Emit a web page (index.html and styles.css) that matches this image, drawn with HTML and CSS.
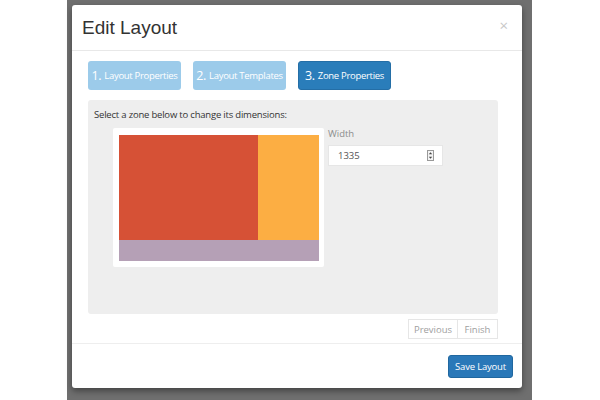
FILE: index.html
```html
<!DOCTYPE html>
<html lang="en">
<head>
  <meta charset="UTF-8">
  <title>Edit Layout</title>
  <link rel="stylesheet" href="styles.css">
</head>
<body>
  <div class="backdrop">
    <div class="dialog">
      <div class="dialog-header">
        <h1>Edit Layout</h1>
        <span class="close">&times;</span>
      </div>

      <div class="dialog-body">
        <div class="steps">
          <span class="step"><b>1.</b> Layout Properties</span>
          <span class="step"><b>2.</b> Layout Templates</span>
          <span class="step active"><b>3.</b> Zone Properties</span>
        </div>

        <div class="panel">
          <p class="hint">Select a zone below to change its dimensions:</p>
          <div class="zone-row">
            <div class="preview">
              <div class="zones">
                <div class="zone zone-main"></div>
                <div class="zone zone-side"></div>
                <div class="zone zone-footer"></div>
              </div>
            </div>
            <div class="field">
              <label>Width</label>
              <div class="number-input">
                <span>1335</span>
                <span class="spin">
                  <svg width="7" height="11" viewBox="0 0 7 11">
                    <rect x="0.5" y="0.5" width="6" height="10" fill="#f4f4f4" stroke="#999"/>
                    <path d="M1.8 4.2 L3.5 2.2 L5.2 4.2 Z" fill="#444"/>
                    <path d="M1.8 6.8 L3.5 8.8 L5.2 6.8 Z" fill="#444"/>
                  </svg>
                </span>
              </div>
            </div>
          </div>
        </div>

        <div class="pager">
          <button class="prev">Previous</button>
          <button class="finish">Finish</button>
        </div>
      </div>

      <div class="dialog-footer">
        <button class="save">Save Layout</button>
      </div>
    </div>
  </div>
</body>
</html>
```

FILE: styles.css
```css
* {
  box-sizing: border-box;
}

body {
  margin: 0;
  background: #ffffff;
  font-family: 'Open Sans', 'Liberation Sans', sans-serif;
}

.backdrop {
  margin-left: 67px;
  width: 465px;
  height: 400px;
  padding: 5px 10px 0 5px;
  background: #6f6f6f;
}

.dialog {
  background: #ffffff;
  height: 383px;
  border-radius: 3px;
  box-shadow: 0 3px 6px rgba(0, 0, 0, 0.4);
  display: flex;
  flex-direction: column;
}

.dialog-header {
  height: 46px;
  padding: 0 10px;
  border-bottom: 1px solid #e8e8e8;
  display: flex;
  align-items: center;
  justify-content: space-between;
}

h1 {
  margin: 0;
  font-family: 'Liberation Sans', sans-serif;
  font-weight: normal;
  font-size: 19px;
  color: #333;
}

.close {
  color: #c8c8c8;
  font-size: 15px;
  margin-top: -6px;
  margin-right: 4px;
}

.dialog-body {
  padding: 10px 24px 4px 16px;
  border-bottom: 1px solid #eeeeee;
}

.steps {
  display: flex;
  gap: 12px;
}

.step {
  width: 93px;
  height: 29px;
  border-radius: 3px;
  background: #9ccbea;
  color: #ffffff;
  font-size: 9.5px;
  letter-spacing: -0.3px;
  display: flex;
  align-items: center;
  justify-content: center;
}

.step b {
  font-weight: normal;
  font-size: 12.5px;
  margin-right: 3px;
}

.step.active {
  background: #2a7dba;
  border: 1px solid #246ea6;
}

.panel {
  margin-top: 10px;
  height: 214px;
  background: #eeeeee;
  border-radius: 3px;
  padding: 8px 6px;
}

.hint {
  margin: 0;
  font-size: 9.5px;
  letter-spacing: -0.2px;
  color: #333;
}

.zone-row {
  display: flex;
  gap: 4px;
  margin: 7px 0 0 19px;
}

.preview {
  background: #ffffff;
  padding: 7px 5px 6px 6px;
  border-radius: 2px;
}

.zones {
  width: 200px;
  display: grid;
  grid-template-columns: 139px 61px;
  grid-template-rows: 105px 21px;
}

.zone-main {
  background: #d65136;
}

.zone-side {
  background: #fcae43;
}

.zone-footer {
  grid-column: span 2;
  background: #b5a0b6;
}

.field label {
  display: block;
  font-size: 9.5px;
  color: #8c8c8c;
  margin-top: -1px;
}

.number-input {
  margin-top: 5px;
  width: 115px;
  height: 21px;
  background: #ffffff;
  border: 1px solid #e6e6e6;
  display: flex;
  align-items: center;
  justify-content: space-between;
  padding: 0 8px 0 9px;
  font-size: 9.5px;
  color: #555;
}

.spin {
  display: flex;
}

.pager {
  display: flex;
  justify-content: flex-end;
  margin-top: 5px;
}

.pager button {
  height: 20px;
  padding: 0;
  background: #ffffff;
  border: 1px solid #e6e6e6;
  color: #a0a0a0;
  font-family: inherit;
  font-size: 9.5px;
}

.pager .prev {
  width: 50px;
}

.pager .finish {
  width: 40px;
  border-left: none;
}

.dialog-footer {
  display: flex;
  justify-content: flex-end;
  padding: 11px 9px 0 0;
}

.save {
  width: 65px;
  height: 23px;
  background: #2a78b8;
  border: 1px solid #20679f;
  border-radius: 3px;
  color: #ffffff;
  font-family: inherit;
  font-size: 9.5px;
  letter-spacing: -0.2px;
  padding: 0;
}
```
